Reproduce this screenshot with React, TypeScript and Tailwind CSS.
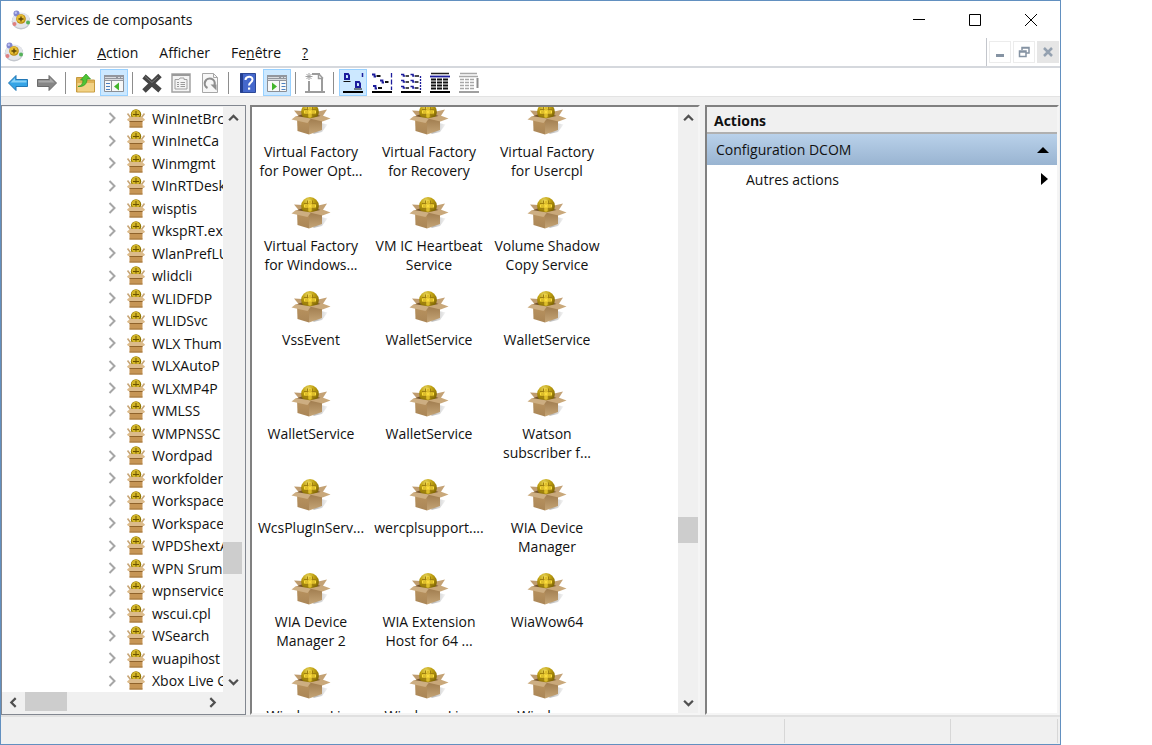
import type { ReactNode } from 'react';

const treeItems = [
  'WinInetBrc',
  'WinInetCa',
  'Winmgmt',
  'WInRTDesk',
  'wisptis',
  'WkspRT.ex',
  'WlanPrefLU',
  'wlidcli',
  'WLIDFDP',
  'WLIDSvc',
  'WLX Thum',
  'WLXAutoP',
  'WLXMP4P',
  'WMLSS',
  'WMPNSSC',
  'Wordpad',
  'workfolder',
  'Workspace',
  'Workspace',
  'WPDShextA',
  'WPN Srum',
  'wpnservice',
  'wscui.cpl',
  'WSearch',
  'wuapihost',
  'Xbox Live G',
];

const components = [
  ['Virtual Factory', 'for Power Opt...'],
  ['Virtual Factory', 'for Recovery'],
  ['Virtual Factory', 'for Usercpl'],
  ['Virtual Factory', 'for Windows...'],
  ['VM IC Heartbeat', 'Service'],
  ['Volume Shadow', 'Copy Service'],
  ['VssEvent'],
  ['WalletService'],
  ['WalletService'],
  ['WalletService'],
  ['WalletService'],
  ['Watson', 'subscriber f...'],
  ['WcsPlugInServ...'],
  ['wercplsupport....'],
  ['WIA Device', 'Manager'],
  ['WIA Device', 'Manager 2'],
  ['WIA Extension', 'Host for 64 ...'],
  ['WiaWow64'],
  ['Windows Live'],
  ['Windows Live'],
  ['Windows'],
];

function AppLogo() {
  return (
    <svg className="w-5 h-5 shrink-0" viewBox="0 0 20 20">
      <ellipse cx="10" cy="11.2" rx="9.3" ry="8.3" fill="#c3c7ce" />
      <ellipse cx="10" cy="10.3" rx="8.8" ry="7.8" fill="#e3e5eb" />
      <circle cx="5.5" cy="3.5" r="3" fill="#8288cf" />
      <circle cx="4.8" cy="2.8" r="1.2" fill="#bfc3f3" />
      <circle cx="3.500" cy="14" r="2" fill="#e08080" />
      <circle cx="17" cy="12.5" r="2" fill="#55b25a" />
      <circle cx="10" cy="9" r="4.8" fill="#b98a12" />
      <circle cx="9.6" cy="8.5" r="4" fill="#e6bd34" />
      <path d="M10 6.500v5M7.500 9h5" stroke="#5b4305" strokeWidth="1.300" />
    </svg>
  );
}

function BoxIcon() {
  return (
    <svg className="w-10 h-8" viewBox="0 0 40 32">
      <defs>
        <radialGradient id="coin" cx="0.4" cy="0.2" r="0.85">
          <stop offset="0" stopColor="#e6d35a" />
          <stop offset="0.4" stopColor="#bfa010" />
          <stop offset="1" stopColor="#6b5300" />
        </radialGradient>
        <linearGradient id="boxLeft" x1="0" y1="0" x2="0" y2="1">
          <stop offset="0" stopColor="#b9935f" />
          <stop offset="1" stopColor="#aa8657" />
        </linearGradient>
        <linearGradient id="boxRight" x1="0" y1="0" x2="0" y2="1">
          <stop offset="0" stopColor="#9c784a" />
          <stop offset="1" stopColor="#c5a577" />
        </linearGradient>
        <linearGradient id="boxShadow" x1="0" y1="0" x2="1" y2="0">
          <stop offset="0" stopColor="#b0b0b0" />
          <stop offset="1" stopColor="#f4f4f4" />
        </linearGradient>
      </defs>
      <path d="M22 31L30 20l6.500 1.500L31 29z" fill="url(#boxShadow)" />
      <path d="M3 7.500L12 8l6 4-10 1.500z" fill="#bf9c6e" />
      <path d="M25 9l11-2.500-4.500 7-8-1z" fill="#c4a275" />
      <path d="M5 13.500l13-4.500 13 4.500-13 4z" fill="#76552c" />
      <circle cx="19" cy="9" r="8.900" fill="url(#coin)" />
      <path d="M16.500 3.500v11M21.500 3.500v11M13 6.500h12M13 11.500h12" stroke="#a08010" strokeWidth="1" />
      <path d="M19 3.500v11M13 9h12" stroke="#fbdc3c" strokeWidth="3" />
      <path d="M19 4v3.500M19 10.500V14M14 9h3.500M20.500 9H24" stroke="#b38f12" strokeWidth="0.800" />
      <path d="M6 14.500L18 16v15.500L6.500 28z" fill="url(#boxLeft)" />
      <path d="M18 16l13-2.500V27l-13 4.500z" fill="url(#boxRight)" />
      <path d="M0.500 16.500L5 13l15 2.500-3.500 4.500z" fill="#cdae82" />
      <path d="M18.500 15.500l13-3 8 3-8 3z" fill="#c9a87a" />
    </svg>
  );
}

function SmallBoxIcon() {
  return (
    <svg className="w-[18px] h-[19px] shrink-0" viewBox="0 0 18 19">
      <path d="M0.500 4.500L3.500 8.500M17.500 4.500L14.500 8.500" stroke="#c8a677" strokeWidth="1.600" />
      <circle cx="9" cy="5.500" r="5.200" fill="#927600" />
      <circle cx="8.800" cy="5" r="4.200" fill="#d3b628" />
      <path d="M9 2v5.500M6 5.500h6" stroke="#6b5200" strokeWidth="1" />
      <path d="M3 8h12l3 2.500-1 1.500H1l-1-1.500z" fill="#dcbb8b" />
      <path d="M2.500 12h13v6.500h-13z" fill="#c69555" />
      <path d="M2.500 12h13v1h-13z" fill="#8f632c" />
      <path d="M2.500 17.500h13v1h-13z" fill="#a1753c" />
    </svg>
  );
}

function Chevron({ className, d }: { className: string; d: string }) {
  return (
    <svg className={className} viewBox="0 0 10 10" fill="none" stroke="currentColor" strokeWidth="2">
      <path d={d} />
    </svg>
  );
}

const UP = 'M1 7.5L5 3.5 9 7.5';
const DOWN = 'M1 2.5L5 6.5 9 2.5';
const LEFT = 'M7 1L3 5 7 9';
const RIGHT = 'M3 1L7 5 3 9';

function ScrollButton({ label, d }: { label: string; d: string }) {
  return (
    <button aria-label={label} className="flex items-center justify-center w-5 h-5 shrink-0 text-[#505050]">
      <Chevron className="w-[11px] h-[11px]" d={d} />
    </button>
  );
}

function ToolButton({ label, active, children }: { label: string; active?: boolean; children: ReactNode }) {
  return (
    <button
      aria-label={label}
      className={
        active
          ? 'flex items-center justify-center w-7 h-[27px] border border-[#99d1ff] bg-[#cce8ff]'
          : 'flex items-center justify-center w-7 h-[27px]'
      }
    >
      <svg className="w-[22px] h-[22px] shrink-0" viewBox="0 0 22 22" fill="none">
        {children}
      </svg>
    </button>
  );
}

function Separator() {
  return (
    <div className="w-2 pl-[3px]">
      <div className="w-px h-[22px] bg-[#8d8d8d]" />
    </div>
  );
}

function Toolbar() {
  return (
    <div className="flex items-center gap-px h-[29px] pl-[3px] pt-px border-b border-[#e3e3e3]">
      <ToolButton label="Précédent">
        <path d="M1.500 11L9 3.500v4h11.500v7H9v4z" fill="#35a4e6" stroke="#2377b5" />
        <path d="M3.500 10.500L8 6v2.500h11.500v2z" fill="#8ad2f7" />
      </ToolButton>
      <ToolButton label="Suivant">
        <path d="M20.500 11L13 3.500v4H1.500v7H13v4z" fill="#868686" stroke="#6b6b6b" />
        <path d="M18.500 10.500L14 6v2.500H2.500v2z" fill="#a9a9a9" />
      </ToolButton>
      <Separator />
      <ToolButton label="Monter d'un niveau">
        <path d="M2.500 5.500h8l1.500 2.500h8.500v12h-18z" fill="#dfb255" stroke="#c59a3e" />
        <path d="M3.500 11h16.500v8.500H3.500z" fill="#f2d285" />
        <path d="M4 14.500c3.500-.5 5-3 5-6.500H6.500L12 2l4.500 5H13c0 5-3 8-9 7.500z" fill="#4fc535" stroke="#2e9320" strokeWidth="0.700" />
      </ToolButton>
      <ToolButton label="Arborescence de la console" active>
        <path d="M1.500 3.500h19v16h-19z" fill="#f8f8f8" stroke="#8b8f96" />
        <path d="M1 3h20v6H1z" fill="#92969e" />
        <path d="M2 5.500h11M15 5.500h2M18 5.500h2M2 7.500h18" stroke="#d9dbdf" />
        <path d="M8.500 9v11" stroke="#8b8f96" />
        <path d="M3 11.500h4M3 14.500h4M3 17.500h4" stroke="#4a7fc0" />
        <path d="M16 10.500v8l-5-4z" fill="#42b52c" />
      </ToolButton>
      <Separator />
      <ToolButton label="Supprimer">
        <path d="M3 4.500L19 18.500M19 3.500L3 19" stroke="#444" strokeWidth="5" />
        <path d="M4 4.500L11 10.500 17 5" stroke="#777" strokeWidth="1" />
      </ToolButton>
      <ToolButton label="Propriétés">
        <path d="M2 2h18v18H2z" fill="#f4f4f4" stroke="#a3a3a3" strokeWidth="1.500" />
        <path d="M2 3h18" stroke="#9a9a9a" strokeWidth="2" />
        <path d="M5 7.500h4l1-1.500h4v1.500h3V17H5z" stroke="#a0a0a0" />
        <path d="M7 10.500h2M10.500 10.500H15M7 12.500h2M10.500 12.500H15M7 14.500h2M10.500 14.500H15" stroke="#9a9a9a" />
      </ToolButton>
      <ToolButton label="Actualiser">
        <path d="M3.500 1.500h11l4 4v15h-15z" fill="#f7f7f7" stroke="#a7a7a7" />
        <path d="M14.500 1.500v4h4" stroke="#a7a7a7" />
        <path d="M8.500 16A5 5 0 1 1 15.500 13" stroke="#8f8f8f" strokeWidth="2.200" />
        <path d="M11.500 12.500h6v6z" fill="#8f8f8f" />
      </ToolButton>
      <Separator />
      <ToolButton label="Aide">
        <path d="M3.500 1.500h15v19h-15z" fill="#4568cc" stroke="#2c4897" />
        <path d="M3 1.500h3v19H3z" fill="#243f90" />
        <path d="M8.500 8c0-4 7-4.500 7-.5 0 3-3.500 3-3.500 6" stroke="#fff" strokeWidth="2" />
        <path d="M11 15.500h2.200v2.200H11z" fill="#fff" />
      </ToolButton>
      <ToolButton label="Volet Actions" active>
        <path d="M1.500 3.500h19v16h-19z" fill="#f8f8f8" stroke="#8b8f96" />
        <path d="M1 3h20v6H1z" fill="#92969e" />
        <path d="M2 5.500h11M15 5.500h2M18 5.500h2M2 7.500h18" stroke="#d9dbdf" />
        <path d="M13.500 9v11" stroke="#8b8f96" />
        <path d="M15.500 11.500h4M15.500 14.500h4M15.500 17.500h4" stroke="#4a7fc0" />
        <path d="M6 10.500v8l5-4z" fill="#42b52c" />
      </ToolButton>
      <Separator />
      <ToolButton label="Nouveau">
        <path d="M5 9v10.500M8 2h8M18 6v13.500M1 20h20" stroke="#9c9c9c" strokeWidth="2" />
        <path d="M14.500 2v4.500H19M15 2l4 4.500" stroke="#9c9c9c" strokeWidth="1.500" />
        <path d="M5 1v7M1.500 4.500h7M2.500 2l5 5M7.500 2l-5 5" stroke="#a0a0a0" />
      </ToolButton>
      <Separator />
      <ToolButton label="Grandes icônes" active>
        <path d="M1 20h20" stroke="#000" strokeWidth="2" />
        <path d="M3 2h3l1 1.500V7H3zM14 10h3l1 1.500V15h-4z" stroke="#1c1c9c" strokeWidth="2" />
        <path d="M20.500 1v4" stroke="#1c1c9c" strokeWidth="1.500" />
        <path d="M1.500 9.500h7M12 17h8" stroke="#111" strokeWidth="1.200" />
      </ToolButton>
      <ToolButton label="Petites icônes">
        <path d="M1 20h20" stroke="#000" strokeWidth="2" />
        <path d="M1 2.500h2.500v2H5M9 8.500h2.500v2H13M2 14h2.500v2.500H6" stroke="#1c1c9c" strokeWidth="1.800" />
        <path d="M5.500 4h4M14 10h3.500M7 16h4" stroke="#111" strokeWidth="1.800" />
        <path d="M20.500 1v4.500M20.500 7.500v5M20.500 14.500v3.500" stroke="#1c1c9c" strokeWidth="1.300" />
      </ToolButton>
      <ToolButton label="Liste">
        <path d="M1 20h20" stroke="#000" strokeWidth="2" />
        <path d="M1 2.500h2.500V4H5M1 8.500h2.500V10H5M1 14.500h2.500V16H5M10.500 2.500H13V4h1.500M10.500 8.500H13V10h1.500M10.500 14.500H13V16h1.500" stroke="#1c1c9c" strokeWidth="1.600" />
        <path d="M5.500 4H9M5.500 10H9M5.500 16H9M15 4h4M15 10h3.500M15 16h3.500" stroke="#111" strokeWidth="1.600" />
        <path d="M20.500 4v14" stroke="#1c1c9c" strokeWidth="1.300" strokeDasharray="2 1" />
      </ToolButton>
      <ToolButton label="Détails">
        <path d="M1 20h20" stroke="#000" strokeWidth="2" />
        <path d="M2 1.500h18" stroke="#222" strokeWidth="1.500" />
        <path d="M1 4.500h20" stroke="#1c1c9c" strokeWidth="1.800" />
        <path d="M2 7.500h18M2 10.500h18M2 13.500h18M2 16.500h18" stroke="#111" strokeWidth="1.800" strokeDasharray="5 1" />
      </ToolButton>
      <ToolButton label="Personnaliser">
        <path d="M1 20h20" stroke="#a0a0a0" strokeWidth="2" />
        <path d="M2 1.500h17M1 4.500h19" stroke="#a8a8a8" strokeWidth="1.500" />
        <path d="M2 7.500h14M2 10.500h14M2 13.500h14M2 16.500h14" stroke="#a8a8a8" strokeWidth="1.500" strokeDasharray="4 1" />
        <path d="M19.500 6v10" stroke="#8c8c8c" strokeWidth="2" />
      </ToolButton>
    </div>
  );
}

function TreePane() {
  return (
    <section className="flex flex-col w-[245px] shrink-0 border border-[#828790] bg-[#f0f0f0] py-px pr-0.5">
      <div className="flex flex-1 min-h-0">
        <ul className="flex flex-col flex-1 min-w-0 overflow-hidden bg-white">
          {treeItems.map((name, i) => (
            <li key={i} className="flex flex-1 min-h-0 items-center pl-[106px] whitespace-nowrap">
              <button aria-label="Développer" className="w-[19px] shrink-0 text-[#a6a6a6]">
                <svg className="w-2 h-3" viewBox="0 0 8 12" fill="none" stroke="currentColor" strokeWidth="2">
                  <path d="M1.500 1L6.500 6 1.500 11" />
                </svg>
              </button>
              <SmallBoxIcon />
              <span className="ml-[7px]">{name}</span>
            </li>
          ))}
        </ul>
        <div className="flex flex-col w-5 shrink-0">
          <ScrollButton label="Haut" d={UP} />
          <div className="flex-1" />
          <div className="h-8 mr-px bg-[#cdcdcd]" />
          <div className="h-[98px]" />
          <ScrollButton label="Bas" d={DOWN} />
        </div>
      </div>
      <div className="flex h-[21px] shrink-0 pl-px pr-[21px]">
        <ScrollButton label="Gauche" d={LEFT} />
        <div className="w-[42px] h-[19px] ml-0.5 bg-[#cdcdcd]" />
        <div className="flex-1" />
        <ScrollButton label="Droite" d={RIGHT} />
      </div>
    </section>
  );
}

function ComponentsPane() {
  return (
    <section className="flex w-[450px] shrink-0 mr-px border-2 border-t-[#808080] border-l-[#808080] border-r-[#f5f5f5] border-b-[#f5f5f5] bg-white">
      <ul className="grid flex-1 grid-cols-[repeat(auto-fill,118px)] auto-rows-[94px] content-start overflow-hidden min-h-0">
        {components.map((lines, i) => (
          <li key={i} className="flex flex-col items-center -mt-1 text-center whitespace-nowrap">
            <BoxIcon />
            <span className="mt-[7px] leading-[19px]">
              {lines.map((line) => (
                <span key={line} className="block">
                  {line}
                </span>
              ))}
            </span>
          </li>
        ))}
      </ul>
      <div className="flex flex-col w-5 shrink-0 bg-[#f0f0f0]">
        <ScrollButton label="Haut" d={UP} />
        <div className="flex-1" />
        <div className="h-[26px] bg-[#cdcdcd]" />
        <div className="h-[150px]" />
        <ScrollButton label="Bas" d={DOWN} />
      </div>
    </section>
  );
}

function ActionsPane() {
  return (
    <section className="flex flex-col flex-1 min-w-0 border-2 border-t-[#808080] border-l-[#808080] border-r-[#f5f5f5] border-b-[#f5f5f5] bg-white">
      <h2 className="h-[27px] pl-[7px] leading-[27px] font-bold bg-[#f0f0f0] border-b-2 border-[#b0b0b0]">Actions</h2>
      <button className="flex items-center justify-between h-[31px] pl-[9px] pr-2 bg-linear-to-b from-[#b9d1ea] to-[#99b4d1]">
        Configuration DCOM
        <svg className="w-3 h-[6px]" viewBox="0 0 12 6">
          <path d="M6 0l6 6H0z" />
        </svg>
      </button>
      <button className="flex items-center justify-between h-7 pl-[39px] pr-[9px]">
        Autres actions
        <svg className="w-[7px] h-3" viewBox="0 0 7 12">
          <path d="M0 0l7 6-7 6z" />
        </svg>
      </button>
    </section>
  );
}

export default function App() {
  return (
    <div className="min-h-screen bg-white">
      <div className="flex flex-col h-screen mr-[91px] border border-[#6290c0] bg-[#f0f0f0] text-[14px] text-[#111111] font-['Open_Sans','Noto_Sans',sans-serif]">
        <header className="flex items-center justify-between h-[37px] shrink-0 bg-white">
          <div className="flex items-center pl-[10px] gap-[5px]">
            <AppLogo />
            <h1>Services de composants</h1>
          </div>
          <div className="flex self-stretch pr-px">
            <button aria-label="Réduire" className="flex items-center justify-center w-14">
              <svg className="w-3 h-3" viewBox="0 0 12 12" stroke="#000" fill="none">
                <path d="M0 5.500h12" />
              </svg>
            </button>
            <button aria-label="Agrandir" className="flex items-center justify-center w-14">
              <svg className="w-3 h-3" viewBox="0 0 12 12" stroke="#000" fill="none">
                <path d="M0.500 0.500h11v11H0.500z" />
              </svg>
            </button>
            <button aria-label="Fermer" className="flex items-center justify-center w-14">
              <svg className="w-3 h-3" viewBox="0 0 12 12" stroke="#000" fill="none">
                <path d="M0 0l12 12M12 0L0 12" />
              </svg>
            </button>
          </div>
        </header>

        <div className="flex items-stretch justify-between h-[30px] shrink-0 bg-white border-b-2 border-[#d5d8dd]">
          <nav className="flex items-center gap-[21px] pl-[3px]">
            <div className="flex items-center gap-[9px]">
              <AppLogo />
              <button>
                <u>F</u>ichier
              </button>
            </div>
            <button>
              <u>A</u>ction
            </button>
            <button>
              Aff<u>i</u>cher
            </button>
            <button>
              Fe<u>n</u>être
            </button>
            <button>
              <u>?</u>
            </button>
          </nav>
          <div className="flex items-center gap-0.5 pl-0.5 pr-px border-l border-[#c3c6cc]">
            <button aria-label="Réduire la console" className="flex items-center justify-center w-[22px] h-[22px] border border-[#ececec]">
              <svg className="w-3 h-3" viewBox="0 0 12 12">
                <path d="M2 8h8v3H2z" fill="#8593a3" />
              </svg>
            </button>
            <button aria-label="Restaurer la console" className="flex items-center justify-center w-[22px] h-[22px] border border-[#ececec]">
              <svg className="w-3 h-3" viewBox="0 0 12 12" fill="none" stroke="#8593a3" strokeWidth="1.500">
                <path d="M4 4V1.500h7V7H8.500M1.500 5h6.500v5.500H1.500zM1 6h7M4 2h7" />
              </svg>
            </button>
            <button aria-label="Fermer la console" className="flex items-center justify-center w-[22px] h-[22px] bg-[#e6e6e6]">
              <svg className="w-3 h-3" viewBox="0 0 12 12" fill="none" stroke="#94a1b0" strokeWidth="2.500">
                <path d="M2 2l8 8M10 2l-8 8" />
              </svg>
            </button>
          </div>
        </div>

        <div className="shrink-0 bg-white">
          <Toolbar />
        </div>

        <main className="flex flex-1 min-h-0 gap-1 pt-2 pr-px">
          <TreePane />
          <ComponentsPane />
          <ActionsPane />
        </main>

        <footer className="flex h-[29px] shrink-0 pt-0.5 pb-px pr-0.5 border-t-2 border-[#e0e0e0]">
          <div className="flex-1 border-r border-[#d7d7d7]" />
          <div className="w-[166px] border-r border-[#d7d7d7]" />
          <div className="w-[107px] border-r border-[#d7d7d7]" />
        </footer>
      </div>
    </div>
  );
}
